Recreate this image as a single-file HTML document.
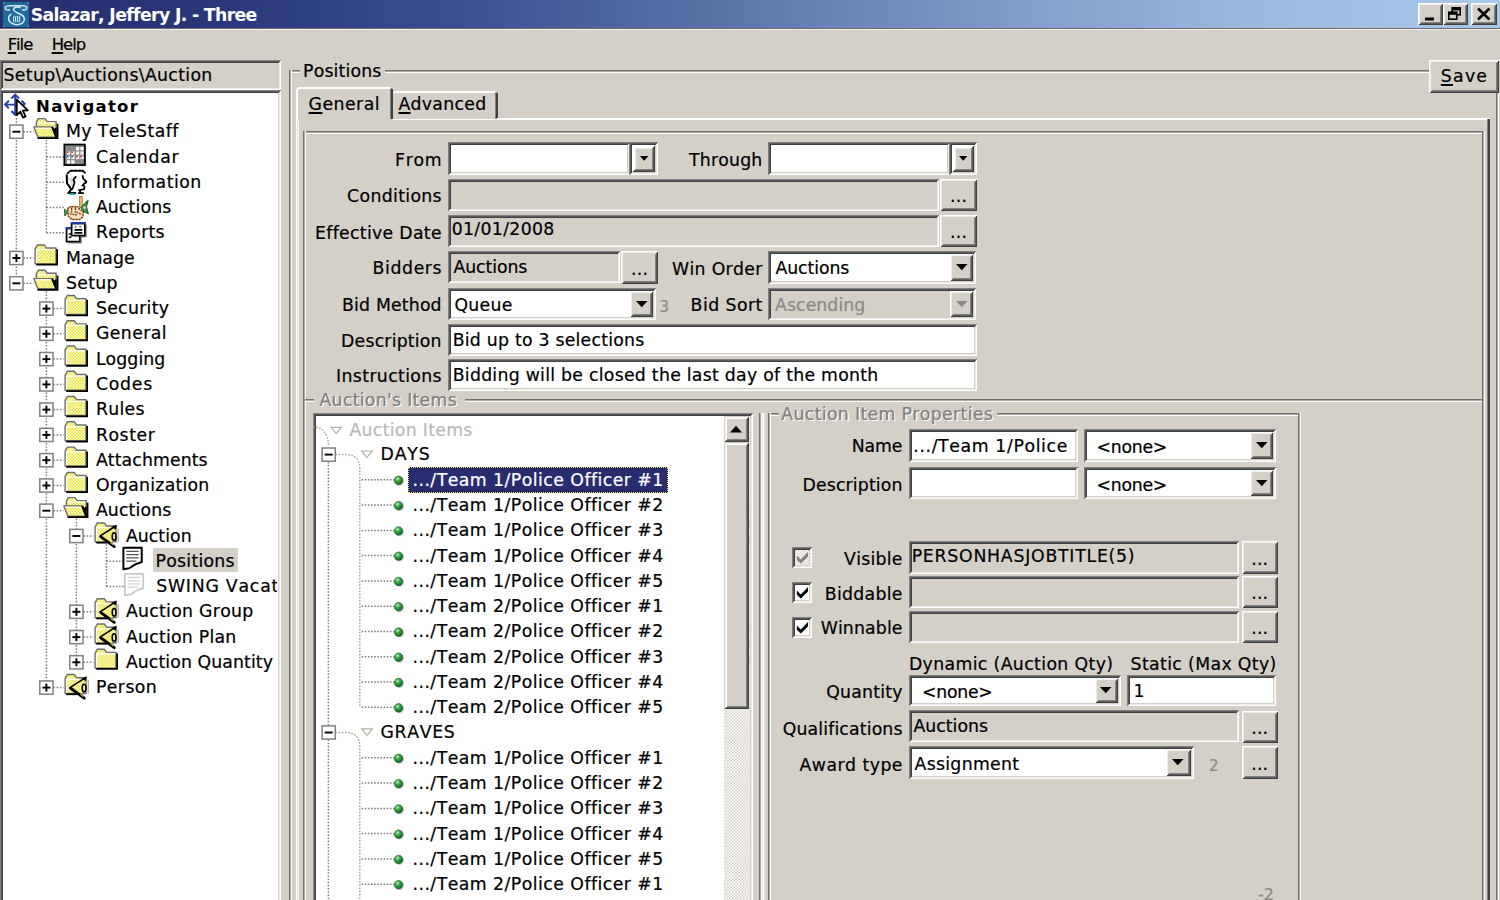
<!DOCTYPE html>
<html lang="en"><head><meta charset="utf-8"><title>Salazar, Jeffery J. - Three</title>
<style>
html,body{margin:0;padding:0;background:#d4d0c8;}
#w{position:relative;width:1500px;height:900px;overflow:hidden;background:#d4d0c8;font-family:"DejaVu Sans","Liberation Sans",sans-serif;font-size:16.5px;color:#000;font-kerning:none;font-variant-ligatures:none;}
#w div,#w svg,#w span.t{position:absolute;}
#w div{box-sizing:border-box;}
span.t{white-space:pre;line-height:normal;-webkit-text-stroke:0.22px currentColor;}
u{text-decoration:underline;text-underline-offset:2px;text-decoration-thickness:1.5px;}
</style></head>
<body><div id="w">
<div style="left:0px;top:0px;width:1500px;height:28px;background:linear-gradient(90deg,#262e6c 0%,#29387a 15%,#3a4f8e 30%,#5d78ac 50%,#829dca 68%,#9dbbe0 85%,#a8c8ec 100%);"></div>
<div style="left:0px;top:28px;width:1500px;height:1px;background:#6a6a78;"></div>
<div style="left:0px;top:29px;width:1500px;height:1px;background:#f4f1e4;"></div>
<svg style="left:3px;top:2px" width="26" height="25" viewBox="0 0 26 25"><rect x="0" y="0" width="26" height="25" fill="#1f6a9a"/>
<rect x="0" y="0" width="1.5" height="1.5" fill="#4a9cc8"/><rect x="24.5" y="0" width="1.5" height="1.5" fill="#4a9cc8"/><rect x="0" y="23.5" width="1.5" height="1.5" fill="#4a9cc8"/><rect x="24.5" y="23.5" width="1.5" height="1.5" fill="#4a9cc8"/>
<g fill="none" stroke="#d6ecf4" stroke-width="1.5" stroke-linecap="round" stroke-linejoin="round">
<path d="M6.5 7.8 C4 8.6 1.8 7.4 2.2 5.6 C2.6 3.8 5 3.6 8 3.7 L18 3.7 C21 3.6 23.6 3.8 23.8 5.6 C24 7.4 22 8.6 19.6 7.8"/>
<path d="M17.2 5.6 C14.5 4.4 10.8 5.2 10.6 7.4 C10.4 9.6 14 10.6 17 12 C20.5 13.6 22.2 16 21 19 C19.6 22.4 14.5 23.4 10.5 22 C6.5 20.6 4.6 17.4 6 14.4 C6.5 13.4 7.2 12.8 8 12.4"/>
</g>
<g stroke="#cfe6f0" stroke-width="1.1"><path d="M10.6 14.6V19.4M12.6 14.6V19.4M14.6 14.6V19.4M16.6 14.6V19.4"/><path d="M10 14.3H17.4M10 19.7H17.4" stroke-width=".8" stroke="#9cc6dc"/></g></svg>
<span id="t0" class="t" style="top:5.00px;font-size:17.3px;left:30.70px;letter-spacing:-0.649px;color:#fff;font-weight:bold;-webkit-text-stroke:0;">Salazar, Jeffery J. - Three</span>
<div style="left:1418px;top:3px;width:25px;height:22px;background:#d4d0c8;box-shadow:inset 1px 1px #fff,inset -1px -1px #404040,inset 2px 2px #ecebe7,inset -2px -2px #606060,inset 3px 3px #d4d0c8,inset -3px -3px #808080;"></div>
<svg style="left:1418px;top:3px" width="25" height="22" viewBox="0 0 25 22"><rect x="7" y="14.5" width="9" height="3" fill="#000"/></svg>
<div style="left:1443px;top:3px;width:25px;height:22px;background:#d4d0c8;box-shadow:inset 1px 1px #fff,inset -1px -1px #404040,inset 2px 2px #ecebe7,inset -2px -2px #606060,inset 3px 3px #d4d0c8,inset -3px -3px #808080;"></div>
<svg style="left:1443px;top:3px" width="25" height="22" viewBox="0 0 25 22"><g fill="none" stroke="#000" stroke-width="1.6"><rect x="9.2" y="4.8" width="8" height="7"/><path d="M9.2 6.2H17.2" stroke-width="2.4"/><rect x="5.8" y="9.2" width="8" height="7" fill="#d4d0c8"/><path d="M5.8 10.6H13.8" stroke-width="2.4"/></g></svg>
<div style="left:1471px;top:3px;width:26px;height:22px;background:#d4d0c8;box-shadow:inset 1px 1px #fff,inset -1px -1px #404040,inset 2px 2px #ecebe7,inset -2px -2px #606060,inset 3px 3px #d4d0c8,inset -3px -3px #808080;"></div>
<svg style="left:1471px;top:3px" width="26" height="22" viewBox="0 0 26 22"><path d="M7 5.5L18.5 16.5M18.5 5.5L7 16.5" stroke="#000" stroke-width="2.6" fill="none"/></svg>
<span id="t1" class="t" style="top:35.20px;font-size:16.5px;left:7.70px;letter-spacing:-1.076px;"><u>F</u>ile</span>
<span id="t2" class="t" style="top:35.20px;font-size:16.5px;left:51.70px;letter-spacing:-1.014px;"><u>H</u>elp</span>
<div style="left:0px;top:60px;width:281px;height:30px;background:#d4d0c8;box-shadow:inset 1px 1px #808080,inset -1px -1px #fff,inset 2px 2px #5a5a5a,inset -2px -2px #ecebe7,inset 3px 3px #404040,inset -3px -3px #d4d0c8;"></div>
<span id="t3" class="t" style="top:64.80px;font-size:17.3px;left:3.50px;letter-spacing:0.337px;">Setup\Auctions\Auction</span>
<div style="left:0px;top:90px;width:281px;height:815px;background:#fff;box-shadow:inset 1px 1px #808080,inset -1px -1px #fff,inset 2px 2px #5a5a5a,inset -2px -2px #ecebe7,inset 3px 3px #404040,inset -3px -3px #d4d0c8;"></div>
<span id="t4" class="t" style="top:97.00px;font-size:16.5px;left:36.10px;letter-spacing:1.254px;font-weight:bold;-webkit-text-stroke:0;">Navigator</span>
<span id="t5" class="t" style="top:121.27px;font-size:17.3px;left:65.90px;letter-spacing:0.421px;">My TeleStaff</span>
<span id="t6" class="t" style="top:146.54px;font-size:17.3px;left:95.90px;letter-spacing:0.712px;">Calendar</span>
<span id="t7" class="t" style="top:171.81px;font-size:17.3px;left:95.90px;letter-spacing:0.506px;">Information</span>
<span id="t8" class="t" style="top:197.08px;font-size:17.3px;left:95.90px;letter-spacing:0.144px;">Auctions</span>
<span id="t9" class="t" style="top:222.35px;font-size:17.3px;left:95.90px;letter-spacing:0.270px;">Reports</span>
<span id="t10" class="t" style="top:247.62px;font-size:17.3px;left:65.90px;letter-spacing:0.009px;">Manage</span>
<span id="t11" class="t" style="top:272.89px;font-size:17.3px;left:65.90px;letter-spacing:0.347px;">Setup</span>
<span id="t12" class="t" style="top:298.16px;font-size:17.3px;left:95.90px;letter-spacing:0.304px;">Security</span>
<span id="t13" class="t" style="top:323.43px;font-size:17.3px;left:95.90px;letter-spacing:0.429px;">General</span>
<span id="t14" class="t" style="top:348.70px;font-size:17.3px;left:95.90px;letter-spacing:0.088px;">Logging</span>
<span id="t15" class="t" style="top:373.97px;font-size:17.3px;left:95.90px;letter-spacing:0.788px;">Codes</span>
<span id="t16" class="t" style="top:399.24px;font-size:17.3px;left:95.90px;letter-spacing:0.323px;">Rules</span>
<span id="t17" class="t" style="top:424.51px;font-size:17.3px;left:95.90px;letter-spacing:0.558px;">Roster</span>
<span id="t18" class="t" style="top:449.78px;font-size:17.3px;left:95.90px;letter-spacing:0.108px;">Attachments</span>
<span id="t19" class="t" style="top:475.05px;font-size:17.3px;left:95.90px;letter-spacing:0.237px;">Organization</span>
<span id="t20" class="t" style="top:500.32px;font-size:17.3px;left:95.90px;letter-spacing:0.144px;">Auctions</span>
<span id="t21" class="t" style="top:525.59px;font-size:17.3px;left:125.90px;letter-spacing:0.068px;">Auction</span>
<div style="left:153px;top:547.5px;width:85px;height:24.5px;background:#d4d0c8;"></div>
<span id="t22" class="t" style="top:550.86px;font-size:17.3px;left:155.60px;letter-spacing:0.249px;">Positions</span>
<span id="t23" class="t" style="top:576.13px;font-size:17.3px;left:156.20px;letter-spacing:0.786px;display:block;width:121.3px;overflow:hidden;">SWING Vacation</span>
<span id="t24" class="t" style="top:601.40px;font-size:17.3px;left:125.90px;letter-spacing:0.294px;">Auction Group</span>
<span id="t25" class="t" style="top:626.67px;font-size:17.3px;left:125.90px;letter-spacing:0.251px;">Auction Plan</span>
<span id="t26" class="t" style="top:651.94px;font-size:17.3px;left:125.90px;letter-spacing:0.096px;">Auction Quantity</span>
<span id="t27" class="t" style="top:677.21px;font-size:17.3px;left:95.90px;letter-spacing:0.443px;">Person</span>
<svg style="left:0;top:0" width="300" height="900" viewBox="0 0 300 900"><style>.d{stroke:#808080;stroke-width:1.5;stroke-dasharray:1.58 1.58;fill:none}</style><defs>
<pattern id="dith" width="2" height="2" patternUnits="userSpaceOnUse"><rect width="2" height="2" fill="#fffef0"/><rect width="1" height="1" fill="#ece21c"/><rect x="1" y="1" width="1" height="1" fill="#ece21c"/></pattern>
<g id="i-fold"><path d="M1.1 12.9V3.4L2.5 .9H6.9L8.3 2.9H14.3V12.9Z" fill="url(#dith)" stroke="#6e6e6e" stroke-width=".9" stroke-linejoin="round"/><path d="M2 3.9H13.6M2 3.9V12.4" fill="none" stroke="#fff" stroke-width=".8"/><path d="M15 3.6V13.4H1.8" fill="none" stroke="#000" stroke-width="1.1"/></g>
<g id="i-fopen"><path d="M1.9 10V3.2L3.1 .9H7.3L8.7 2.8H14.4V12.6" fill="url(#dith)" stroke="#6e6e6e" stroke-width=".9" stroke-linejoin="round"/><path d="M2.8 3.7H13.6" stroke="#fff" stroke-width=".8"/><path d="M12.6 7.6L14.7 12.9V6.4Z" fill="#000"/><path d="M.3 6.2H11.9L14.5 12.6H2.8Z" fill="url(#dith)" stroke="#6e6e6e" stroke-width=".9" stroke-linejoin="round"/><path d="M1.2 7H11.4" stroke="#fff" stroke-width=".8"/><path d="M11.9 6.2L14.5 12.8" stroke="#000" stroke-width="1.3"/><path d="M2.6 13.3H15.3V4.2" fill="none" stroke="#000" stroke-width="1.1"/></g>
<g id="i-fauc"><path d="M1.1 12.9V3.4L2.5 .9H6.9L8.3 2.9H14.3V12.9Z" fill="url(#dith)" stroke="#6e6e6e" stroke-width=".9" stroke-linejoin="round"/><path d="M2 3.9H10M2 3.9V12.4" fill="none" stroke="#fff" stroke-width=".8"/><path d="M1.8 13.4H8.6" fill="none" stroke="#000" stroke-width="1.1"/><path d="M15.7 4.4V13" stroke="#a0a0a0" stroke-width=".7"/><path d="M4.2 9.4L14.3 2.8L13.8 9.4L11 13.6Z" fill="url(#dith)"/><path d="M3.9 9.4L14.3 2.7" stroke="#000" stroke-width="1" fill="none"/><path d="M11.4 3.4L14.8 2L14.2 5.2Z" fill="#000"/><path d="M4.6 9.6L13.2 15.9" stroke="#000" stroke-width="1.8" stroke-linecap="round"/><path d="M10.8 13.6L12.6 14.9" stroke="#e8e020" stroke-width=".6"/><ellipse cx="13.1" cy="9.5" rx="1.2" ry="2.4" fill="none" stroke="#000" stroke-width="1"/></g>
<g id="i-doc"><path d="M0 .6H11.6V9.6L7.5 11.1L3.7 13.6L0 14.2Z" fill="#fff" stroke="#000" stroke-width="1.25" stroke-linejoin="round"/><path d="M1.8 2.9H9.7M1.8 5H9.7M1.8 7H9.7M1.8 9H8.2" stroke="#555" stroke-width=".8"/></g>
<g id="i-docg"><path d="M0 .6H11.6V9.6L7.5 11.1L3.7 13.6L0 14.2Z" fill="#fff" stroke="#c8c8c8" stroke-width="1.1" stroke-linejoin="round"/><path d="M1.8 2.9H9.7M1.8 5H9.7M1.8 7H9.7M1.8 9H8.2" stroke="#d2d2d2" stroke-width=".8"/></g>
<g id="i-cal"><rect x="1.6" y="1.2" width="12.6" height="12.6" fill="#bdbdbd"/><rect x=".6" y=".4" width="13" height="13" fill="#8a8a8a" stroke="#000" stroke-width="1.1"/><g fill="#fff"><rect x="8" y="2" width="2" height="2"/><rect x="10.8" y="2" width="2" height="2"/><rect x="2.2" y="4.8" width="2" height="2"/><rect x="5" y="4.8" width="2" height="2"/><rect x="8" y="4.8" width="2" height="2"/><rect x="10.8" y="4.8" width="2" height="2"/><rect x="2.2" y="7.6" width="2" height="2"/><rect x="5" y="7.6" width="2" height="2"/><rect x="8" y="7.6" width="2" height="2"/><rect x="10.8" y="7.6" width="2" height="2"/><rect x="2.2" y="10.4" width="2" height="2"/><rect x="5" y="10.4" width="2" height="2"/></g><g fill="#e02020"><rect x="2.2" y="4.8" width="1" height="1"/><rect x="5" y="4.8" width="1" height="1"/><rect x="8" y="7.6" width="1" height="1"/><rect x="10.8" y="7.6" width="1" height="1"/></g><g fill="#2040c0"><rect x="2.2" y="7.6" width="1" height="1"/><rect x="5" y="7.6" width="1" height="1"/></g></g>
<g id="i-info" fill="none" stroke="#000" stroke-width="1.15" stroke-linecap="round" stroke-linejoin="round"><path d="M2.8 5L5.6 11.8L6.6 6.2Z" fill="#dcdcdc" stroke="none"/><path d="M2.7 2.6L4.4 1H12.2L13.7 2.2" stroke-dasharray="1.5 .9"/><path d="M2.1 3.9L2.3 8.9L5 12.7L3.1 15.1H7.5" stroke-width="1.3"/><path d="M7.8 4.9L6.3 6.4L7.1 8.5L6.5 10.2L5.7 12.5" stroke-dasharray="1.7 .8"/><path d="M12.2 4.3L12.6 6L14.7 8.1L13.5 8.9L12 10.2L13.5 11.1L13 12.7L9.9 13.2L10.9 14.9" stroke-dasharray="1.9 .7"/><path d="M9.7 15.1H12.6"/><path d="M4.6 15.7H6.6" stroke="#0aa"/></g>
<g id="i-auc"><path d="M10.3 1.2H11.9V8.4H10.3Z" fill="#f0cc80" stroke="#a86a20" stroke-width=".6"/><path d="M11.2 8.2L15.6 3.8L14.6 7.8L15.8 12.2L12.4 10.4Z" fill="#38a050" stroke="#1c6a2c" stroke-width=".7" stroke-linejoin="round"/><path d="M.7 9.2L2.8 11.2L.9 13.6Z" fill="#38a050" stroke="#1c6a2c" stroke-width=".6" stroke-linejoin="round"/><circle cx="13.4" cy="8.2" r=".9" fill="#f0c0d8"/><path d="M2.8 9.4C3 7.6 4.8 7.4 5.2 8.4C5.8 7 7.4 7 7.6 8.4C8.4 7.2 10 7.6 10 9.2L12.6 10.6L12.4 14L10.4 15.8H5.4L3 13.6Z" fill="#f6e2b4" stroke="#7a3410" stroke-width=".9" stroke-linejoin="round" stroke-dasharray="1.4 .5"/><path d="M5.2 8.6V11.4M7.6 8.6V11.6M8.4 11.2L11.4 12.6M4 12.2L8.6 13" stroke="#7a3410" stroke-width=".8" fill="none" stroke-dasharray="1.2 .5"/></g>
<g id="i-rep"><path d="M2.8 14.6H11.2V11" fill="none" stroke="#8a8a8a" stroke-width=".8"/><rect x="2" y="5.4" width="8.4" height="8.4" fill="#fff" stroke="#000" stroke-width="1.1"/><path d="M1.5 5.3H5.2" stroke="#2038a8" stroke-width="1.3"/><path d="M14.4 3V10.8H11" fill="none" stroke="#8a8a8a" stroke-width=".8"/><rect x="5.2" y="2.3" width="8.4" height="7.7" fill="#fff" stroke="#000" stroke-width="1.1"/><path d="M4.7 2.1H14.2" stroke="#2038a8" stroke-width="1.4"/><path d="M7 6.4H12M7 8.3H12" stroke="#000" stroke-width="1"/><path d="M7.4 4.5H8.2M10.2 4.5H11" stroke="#000" stroke-width=".9"/><path d="M3.4 9H5M3.4 11H5" stroke="#000" stroke-width=".9"/></g>
<g id="i-nav"><g stroke="#2a3fa4" stroke-width="1.2" fill="none"><path d="M7.4 1.4V13.4M1.2 7.4H13.6"/><path d="M5 3.6L7.4 1.2L9.8 3.6M5 11.4L7.4 13.8L9.8 11.4M3.4 5L1 7.4L3.4 9.8M11.4 5L13.8 7.4" stroke-width="1.3"/></g><path d="M8.4 4.2V14L10.6 11.8L12.4 15.6L14 14.9L12.2 11.2L15.4 11Z" fill="#fff" stroke="#000" stroke-width="1.15" stroke-linejoin="round"/></g>
</defs><path d="M16.4 118.0V283.3" class="d"/><path d="M46.4 139.7V232.8" class="d"/><path d="M46.4 291.3V687.6" class="d"/><path d="M76.4 518.7V662.3" class="d"/><path d="M106.4 544.0V586.5" class="d"/><use href="#i-nav" transform="translate(3.5 92.9) scale(1.58)"/><path d="M23.4 131.7H33.4" class="d"/><use href="#i-fopen" transform="translate(33.4 117.2) scale(1.58)"/><rect x="9.8" y="125.1" width="13.2" height="13.2" fill="#fff" stroke="#808080" stroke-width="1.5"/><path d="M12.4 131.7H20.4" stroke="#000" stroke-width="1.9"/><path d="M46.4 156.9H64.4" class="d"/><use href="#i-cal" transform="translate(63.4 143.9) scale(1.58)"/><path d="M46.4 182.2H64.4" class="d"/><use href="#i-info" transform="translate(63.4 169.2) scale(1.58)"/><path d="M46.4 207.5H64.4" class="d"/><use href="#i-auc" transform="translate(63.4 194.5) scale(1.58)"/><path d="M46.4 232.8H64.4" class="d"/><use href="#i-rep" transform="translate(63.4 219.8) scale(1.58)"/><path d="M23.4 258.0H33.4" class="d"/><use href="#i-fold" transform="translate(33.4 243.5) scale(1.58)"/><rect x="9.8" y="251.4" width="13.2" height="13.2" fill="#fff" stroke="#808080" stroke-width="1.5"/><path d="M12.4 258.0H20.4" stroke="#000" stroke-width="1.9"/><path d="M16.4 254.0V262.0" stroke="#000" stroke-width="1.9"/><path d="M23.4 283.3H33.4" class="d"/><use href="#i-fopen" transform="translate(33.4 268.8) scale(1.58)"/><rect x="9.8" y="276.7" width="13.2" height="13.2" fill="#fff" stroke="#808080" stroke-width="1.5"/><path d="M12.4 283.3H20.4" stroke="#000" stroke-width="1.9"/><path d="M53.4 308.6H63.4" class="d"/><use href="#i-fold" transform="translate(63.4 294.1) scale(1.58)"/><rect x="39.8" y="302.0" width="13.2" height="13.2" fill="#fff" stroke="#808080" stroke-width="1.5"/><path d="M42.4 308.6H50.4" stroke="#000" stroke-width="1.9"/><path d="M46.4 304.6V312.6" stroke="#000" stroke-width="1.9"/><path d="M53.4 333.8H63.4" class="d"/><use href="#i-fold" transform="translate(63.4 319.3) scale(1.58)"/><rect x="39.8" y="327.2" width="13.2" height="13.2" fill="#fff" stroke="#808080" stroke-width="1.5"/><path d="M42.4 333.8H50.4" stroke="#000" stroke-width="1.9"/><path d="M46.4 329.8V337.8" stroke="#000" stroke-width="1.9"/><path d="M53.4 359.1H63.4" class="d"/><use href="#i-fold" transform="translate(63.4 344.6) scale(1.58)"/><rect x="39.8" y="352.5" width="13.2" height="13.2" fill="#fff" stroke="#808080" stroke-width="1.5"/><path d="M42.4 359.1H50.4" stroke="#000" stroke-width="1.9"/><path d="M46.4 355.1V363.1" stroke="#000" stroke-width="1.9"/><path d="M53.4 384.4H63.4" class="d"/><use href="#i-fold" transform="translate(63.4 369.9) scale(1.58)"/><rect x="39.8" y="377.8" width="13.2" height="13.2" fill="#fff" stroke="#808080" stroke-width="1.5"/><path d="M42.4 384.4H50.4" stroke="#000" stroke-width="1.9"/><path d="M46.4 380.4V388.4" stroke="#000" stroke-width="1.9"/><path d="M53.4 409.6H63.4" class="d"/><use href="#i-fold" transform="translate(63.4 395.1) scale(1.58)"/><rect x="39.8" y="403.0" width="13.2" height="13.2" fill="#fff" stroke="#808080" stroke-width="1.5"/><path d="M42.4 409.6H50.4" stroke="#000" stroke-width="1.9"/><path d="M46.4 405.6V413.6" stroke="#000" stroke-width="1.9"/><path d="M53.4 434.9H63.4" class="d"/><use href="#i-fold" transform="translate(63.4 420.4) scale(1.58)"/><rect x="39.8" y="428.3" width="13.2" height="13.2" fill="#fff" stroke="#808080" stroke-width="1.5"/><path d="M42.4 434.9H50.4" stroke="#000" stroke-width="1.9"/><path d="M46.4 430.9V438.9" stroke="#000" stroke-width="1.9"/><path d="M53.4 460.2H63.4" class="d"/><use href="#i-fold" transform="translate(63.4 445.7) scale(1.58)"/><rect x="39.8" y="453.6" width="13.2" height="13.2" fill="#fff" stroke="#808080" stroke-width="1.5"/><path d="M42.4 460.2H50.4" stroke="#000" stroke-width="1.9"/><path d="M46.4 456.2V464.2" stroke="#000" stroke-width="1.9"/><path d="M53.4 485.5H63.4" class="d"/><use href="#i-fold" transform="translate(63.4 471.0) scale(1.58)"/><rect x="39.8" y="478.9" width="13.2" height="13.2" fill="#fff" stroke="#808080" stroke-width="1.5"/><path d="M42.4 485.5H50.4" stroke="#000" stroke-width="1.9"/><path d="M46.4 481.5V489.5" stroke="#000" stroke-width="1.9"/><path d="M53.4 510.7H63.4" class="d"/><use href="#i-fopen" transform="translate(63.4 496.2) scale(1.58)"/><rect x="39.8" y="504.1" width="13.2" height="13.2" fill="#fff" stroke="#808080" stroke-width="1.5"/><path d="M42.4 510.7H50.4" stroke="#000" stroke-width="1.9"/><path d="M83.4 536.0H93.4" class="d"/><use href="#i-fauc" transform="translate(93.4 521.5) scale(1.58)"/><rect x="69.8" y="529.4" width="13.2" height="13.2" fill="#fff" stroke="#808080" stroke-width="1.5"/><path d="M72.4 536.0H80.4" stroke="#000" stroke-width="1.9"/><path d="M106.4 561.3H124.4" class="d"/><use href="#i-doc" transform="translate(123.4 546.8) scale(1.58)"/><path d="M106.4 586.5H124.4" class="d"/><use href="#i-docg" transform="translate(124.9 572.9) scale(1.58)"/><path d="M83.4 611.8H93.4" class="d"/><use href="#i-fauc" transform="translate(93.4 597.3) scale(1.58)"/><rect x="69.8" y="605.2" width="13.2" height="13.2" fill="#fff" stroke="#808080" stroke-width="1.5"/><path d="M72.4 611.8H80.4" stroke="#000" stroke-width="1.9"/><path d="M76.4 607.8V615.8" stroke="#000" stroke-width="1.9"/><path d="M83.4 637.1H93.4" class="d"/><use href="#i-fauc" transform="translate(93.4 622.6) scale(1.58)"/><rect x="69.8" y="630.5" width="13.2" height="13.2" fill="#fff" stroke="#808080" stroke-width="1.5"/><path d="M72.4 637.1H80.4" stroke="#000" stroke-width="1.9"/><path d="M76.4 633.1V641.1" stroke="#000" stroke-width="1.9"/><path d="M83.4 662.3H93.4" class="d"/><use href="#i-fold" transform="translate(93.4 647.8) scale(1.58)"/><rect x="69.8" y="655.7" width="13.2" height="13.2" fill="#fff" stroke="#808080" stroke-width="1.5"/><path d="M72.4 662.3H80.4" stroke="#000" stroke-width="1.9"/><path d="M76.4 658.3V666.3" stroke="#000" stroke-width="1.9"/><path d="M53.4 687.6H63.4" class="d"/><use href="#i-fauc" transform="translate(63.4 673.1) scale(1.58)"/><rect x="39.8" y="681.0" width="13.2" height="13.2" fill="#fff" stroke="#808080" stroke-width="1.5"/><path d="M42.4 687.6H50.4" stroke="#000" stroke-width="1.9"/><path d="M46.4 683.6V691.6" stroke="#000" stroke-width="1.9"/></svg>
<div style="left:289px;top:69.5px;width:11px;height:1px;background:#75726d;"></div>
<div style="left:289px;top:70.5px;width:11px;height:1px;background:#aba8a2;"></div>
<div style="left:289px;top:71.5px;width:11px;height:1px;background:#fff;"></div>
<div style="left:385px;top:69.5px;width:1045px;height:1px;background:#75726d;"></div>
<div style="left:385px;top:70.5px;width:1045px;height:1px;background:#aba8a2;"></div>
<div style="left:385px;top:71.5px;width:1045px;height:1px;background:#fff;"></div>
<div style="left:288.5px;top:70px;width:1px;height:832px;background:#75726d;"></div>
<div style="left:289.5px;top:70px;width:1px;height:832px;background:#aba8a2;"></div>
<div style="left:290.5px;top:70px;width:1px;height:832px;background:#fff;"></div>
<div style="left:1495.5px;top:92px;width:1px;height:810px;background:#75726d;"></div>
<div style="left:1496.5px;top:92px;width:1px;height:810px;background:#aba8a2;"></div>
<div style="left:1497.5px;top:92px;width:1px;height:810px;background:#fff;"></div>
<span id="t28" class="t" style="top:61.20px;font-size:17.3px;left:303.10px;letter-spacing:0.162px;">Positions</span>
<div style="left:1429px;top:60px;width:70px;height:33px;background:#d4d0c8;box-shadow:inset 1px 1px #fff,inset -1px -1px #404040,inset 2px 2px #ecebe7,inset -2px -2px #606060,inset 3px 3px #d4d0c8,inset -3px -3px #808080;"></div>
<span id="t29" class="t" style="top:66.40px;font-size:17.3px;left:1440.80px;letter-spacing:1.254px;"><u>S</u>ave</span>
<div style="left:392px;top:118px;width:1098px;height:2px;background:#fff;"></div>
<div style="left:296px;top:89px;width:2px;height:31px;background:#fff;"></div>
<div style="left:296px;top:120px;width:1px;height:781px;background:#fff;"></div>
<div style="left:297px;top:120px;width:1px;height:781px;background:#e4e2dc;"></div>
<div style="left:298px;top:120px;width:1px;height:781px;background:#fbfbfa;"></div>
<div style="left:1487px;top:119px;width:1px;height:782px;background:#808080;"></div>
<div style="left:1488px;top:119px;width:2px;height:782px;background:#404040;"></div>
<div style="left:296px;top:87px;width:96px;height:32px;border-top:2px solid #fff;border-top-left-radius:4px;border-top-right-radius:3px;border-left:2px solid #fff;border-right:2px solid #808080;background:#d4d0c8;"></div>
<div style="left:391px;top:89px;width:2px;height:30px;background:#404040;"></div>
<span id="t30" class="t" style="top:94.10px;font-size:17.3px;left:308.60px;letter-spacing:0.479px;"><u>G</u>eneral</span>
<div style="left:393px;top:90.5px;width:104px;height:28px;border-top:2px solid #fff;border-top-left-radius:3px;border-top-right-radius:3px;border-right:2px solid #808080;background:#d4d0c8;"></div>
<div style="left:495.6px;top:92.5px;width:2px;height:25.5px;background:#404040;"></div>
<span id="t31" class="t" style="top:94.10px;font-size:17.3px;left:398.40px;letter-spacing:0.318px;"><u>A</u>dvanced</span>
<div style="left:302.7px;top:131.3px;width:1181px;height:1px;background:#75726d;"></div>
<div style="left:302.7px;top:132.3px;width:1181px;height:1px;background:#aba8a2;"></div>
<div style="left:302.7px;top:133.3px;width:1181px;height:1px;background:#fff;"></div>
<div style="left:302.7px;top:131.3px;width:1px;height:770px;background:#75726d;"></div>
<div style="left:303.7px;top:131.3px;width:1px;height:770px;background:#aba8a2;"></div>
<div style="left:304.7px;top:131.3px;width:1px;height:770px;background:#fff;"></div>
<div style="left:1481.6px;top:131.3px;width:1px;height:770px;background:#75726d;"></div>
<div style="left:1482.6px;top:131.3px;width:1px;height:770px;background:#aba8a2;"></div>
<div style="left:1483.6px;top:131.3px;width:1px;height:770px;background:#fff;"></div>
<span id="t32" class="t" style="top:149.60px;font-size:17.3px;left:395.10px;letter-spacing:0.682px;">From</span>
<div style="left:448px;top:142px;width:182px;height:32.5px;background:#fff;box-shadow:inset 1px 1px #808080,inset -1px -1px #fff,inset 2px 2px #5a5a5a,inset -2px -2px #ecebe7,inset 3px 3px #404040,inset -3px -3px #d4d0c8;"></div>
<div style="left:629px;top:142px;width:29px;height:32.5px;background:#d4d0c8;box-shadow:inset 1px 1px #808080,inset -1px -1px #fff,inset 2px 2px #5a5a5a,inset -2px -2px #ecebe7,inset 3px 3px #404040,inset -3px -3px #d4d0c8;"></div>
<div style="left:632px;top:145px;width:23px;height:26.5px;background:#d4d0c8;box-shadow:inset 1px 1px #fff,inset -1px -1px #404040,inset 2px 2px #fff,inset -2px -2px #5c5c5c,inset 3px 3px #fff,inset -3px -3px #808080,inset 4px 4px #eceae6;"></div>
<svg style="left:638.6999999999999px;top:155.04999999999998px" width="10.4" height="6.8" viewBox="0 0 10.4 6.8"><path d="M1 1H9.4L5.2 5.8Z" fill="#000"/></svg>
<span id="t33" class="t" style="top:150.20px;font-size:17.3px;left:689.10px;letter-spacing:0.190px;">Through</span>
<div style="left:768px;top:142px;width:182px;height:32.5px;background:#fff;box-shadow:inset 1px 1px #808080,inset -1px -1px #fff,inset 2px 2px #5a5a5a,inset -2px -2px #ecebe7,inset 3px 3px #404040,inset -3px -3px #d4d0c8;"></div>
<div style="left:949px;top:142px;width:28px;height:32.5px;background:#d4d0c8;box-shadow:inset 1px 1px #808080,inset -1px -1px #fff,inset 2px 2px #5a5a5a,inset -2px -2px #ecebe7,inset 3px 3px #404040,inset -3px -3px #d4d0c8;"></div>
<div style="left:952px;top:145px;width:22px;height:26.5px;background:#d4d0c8;box-shadow:inset 1px 1px #fff,inset -1px -1px #404040,inset 2px 2px #fff,inset -2px -2px #5c5c5c,inset 3px 3px #fff,inset -3px -3px #808080,inset 4px 4px #eceae6;"></div>
<svg style="left:958.1999999999999px;top:155.04999999999998px" width="10.4" height="6.8" viewBox="0 0 10.4 6.8"><path d="M1 1H9.4L5.2 5.8Z" fill="#000"/></svg>
<span id="t34" class="t" style="top:186.40px;font-size:17.3px;left:347.10px;letter-spacing:0.335px;">Conditions</span>
<div style="left:448px;top:179px;width:490.5px;height:32px;background:#d4d0c8;box-shadow:inset 1px 1px #808080,inset -1px -1px #fff,inset 2px 2px #5a5a5a,inset -2px -2px #ecebe7,inset 3px 3px #404040,inset -3px -3px #d4d0c8;"></div>
<div style="left:940px;top:179px;width:37px;height:32px;background:#d4d0c8;box-shadow:inset 1px 1px #fff,inset -1px -1px #404040,inset 2px 2px #ecebe7,inset -2px -2px #606060,inset 3px 3px #d4d0c8,inset -3px -3px #808080;"></div>
<span id="t35" class="t" style="top:186.10px;font-size:17.3px;left:950.10px;letter-spacing:0.208px;">...</span>
<span id="t36" class="t" style="top:222.60px;font-size:17.3px;left:315.10px;letter-spacing:0.310px;">Effective Date</span>
<div style="left:448px;top:215px;width:490.5px;height:32px;background:#d4d0c8;box-shadow:inset 1px 1px #808080,inset -1px -1px #fff,inset 2px 2px #5a5a5a,inset -2px -2px #ecebe7,inset 3px 3px #404040,inset -3px -3px #d4d0c8;"></div>
<span id="t37" class="t" style="top:218.90px;font-size:17.3px;left:451.70px;letter-spacing:0.332px;">01/01/2008</span>
<div style="left:940px;top:215px;width:37px;height:32px;background:#d4d0c8;box-shadow:inset 1px 1px #fff,inset -1px -1px #404040,inset 2px 2px #ecebe7,inset -2px -2px #606060,inset 3px 3px #d4d0c8,inset -3px -3px #808080;"></div>
<span id="t38" class="t" style="top:222.10px;font-size:17.3px;left:950.10px;letter-spacing:0.208px;">...</span>
<span id="t39" class="t" style="top:258.20px;font-size:17.3px;left:372.60px;letter-spacing:0.609px;">Bidders</span>
<div style="left:448px;top:251px;width:171.5px;height:32px;background:#d4d0c8;box-shadow:inset 1px 1px #808080,inset -1px -1px #fff,inset 2px 2px #5a5a5a,inset -2px -2px #ecebe7,inset 3px 3px #404040,inset -3px -3px #d4d0c8;"></div>
<span id="t40" class="t" style="top:256.90px;font-size:17.3px;left:453.50px;letter-spacing:-0.084px;">Auctions</span>
<div style="left:621px;top:251px;width:37px;height:32.5px;background:#d4d0c8;box-shadow:inset 1px 1px #fff,inset -1px -1px #404040,inset 2px 2px #ecebe7,inset -2px -2px #606060,inset 3px 3px #d4d0c8,inset -3px -3px #808080;"></div>
<span id="t41" class="t" style="top:258.60px;font-size:17.3px;left:631.10px;letter-spacing:0.208px;">...</span>
<span id="t42" class="t" style="top:258.60px;font-size:17.3px;left:672.10px;letter-spacing:0.306px;">Win Order</span>
<div style="left:768px;top:251px;width:208px;height:32.5px;background:#fff;box-shadow:inset 1px 1px #808080,inset -1px -1px #fff,inset 2px 2px #5a5a5a,inset -2px -2px #ecebe7,inset 3px 3px #404040,inset -3px -3px #d4d0c8;"></div>
<div style="left:950px;top:254px;width:23px;height:26.5px;background:#d4d0c8;box-shadow:inset 1px 1px #fff,inset -1px -1px #404040,inset 2px 2px #ecebe7,inset -2px -2px #606060,inset 3px 3px #d4d0c8,inset -3px -3px #808080;"></div>
<svg style="left:954.75px;top:263.40000000000003px" width="13.5" height="8.3" viewBox="0 0 13.5 8.3"><path d="M1 1H12.5L6.75 7.3Z" fill="#000"/></svg>
<span id="t43" class="t" style="top:257.80px;font-size:17.3px;left:775.50px;letter-spacing:-0.084px;">Auctions</span>
<span id="t44" class="t" style="top:294.60px;font-size:17.3px;left:342.10px;letter-spacing:0.174px;">Bid Method</span>
<div style="left:448px;top:287.5px;width:208px;height:32px;background:#fff;box-shadow:inset 1px 1px #808080,inset -1px -1px #fff,inset 2px 2px #5a5a5a,inset -2px -2px #ecebe7,inset 3px 3px #404040,inset -3px -3px #d4d0c8;"></div>
<div style="left:630px;top:290.5px;width:23px;height:26px;background:#d4d0c8;box-shadow:inset 1px 1px #fff,inset -1px -1px #404040,inset 2px 2px #ecebe7,inset -2px -2px #606060,inset 3px 3px #d4d0c8,inset -3px -3px #808080;"></div>
<svg style="left:634.75px;top:299.65000000000003px" width="13.5" height="8.3" viewBox="0 0 13.5 8.3"><path d="M1 1H12.5L6.75 7.3Z" fill="#000"/></svg>
<span id="t45" class="t" style="top:294.60px;font-size:17.3px;left:454.50px;letter-spacing:0.255px;">Queue</span>
<span id="t46" class="t" style="top:298.10px;font-size:15px;left:659.60px;letter-spacing:0.682px;color:#8c8a84;">3</span>
<span id="t47" class="t" style="top:294.60px;font-size:17.3px;left:690.60px;letter-spacing:0.450px;">Bid Sort</span>
<div style="left:768px;top:287.5px;width:208px;height:32px;background:#d4d0c8;box-shadow:inset 1px 1px #808080,inset -1px -1px #fff,inset 2px 2px #5a5a5a,inset -2px -2px #ecebe7,inset 3px 3px #404040,inset -3px -3px #d4d0c8;"></div>
<div style="left:950px;top:290.5px;width:23px;height:26px;background:#d4d0c8;box-shadow:inset 1px 1px #fff,inset -1px -1px #404040,inset 2px 2px #ecebe7,inset -2px -2px #606060,inset 3px 3px #d4d0c8,inset -3px -3px #808080;"></div>
<svg style="left:954.75px;top:299.65000000000003px" width="13.5" height="8.3" viewBox="0 0 13.5 8.3"><path d="M1 1H12.5L6.75 7.3Z" fill="#8c8984"/></svg>
<span id="t48" class="t" style="top:294.60px;font-size:17.3px;left:775.10px;letter-spacing:0.074px;color:#8c8984;">Ascending</span>
<span id="t49" class="t" style="top:330.60px;font-size:17.3px;left:341.10px;letter-spacing:0.206px;">Description</span>
<div style="left:448px;top:323.5px;width:529px;height:32px;background:#fff;box-shadow:inset 1px 1px #808080,inset -1px -1px #fff,inset 2px 2px #5a5a5a,inset -2px -2px #ecebe7,inset 3px 3px #404040,inset -3px -3px #d4d0c8;"></div>
<span id="t50" class="t" style="top:329.60px;font-size:17.3px;left:452.70px;letter-spacing:0.241px;">Bid up to 3 selections</span>
<span id="t51" class="t" style="top:365.60px;font-size:17.3px;left:336.10px;letter-spacing:0.364px;">Instructions</span>
<div style="left:448px;top:358.5px;width:529px;height:32px;background:#fff;box-shadow:inset 1px 1px #808080,inset -1px -1px #fff,inset 2px 2px #5a5a5a,inset -2px -2px #ecebe7,inset 3px 3px #404040,inset -3px -3px #d4d0c8;"></div>
<span id="t52" class="t" style="top:364.60px;font-size:17.3px;left:452.70px;letter-spacing:0.272px;">Bidding will be closed the last day of the month</span>
<div style="left:304.5px;top:399.2px;width:9px;height:1px;background:#75726d;"></div>
<div style="left:304.5px;top:400.2px;width:9px;height:1px;background:#aba8a2;"></div>
<div style="left:304.5px;top:401.2px;width:9px;height:1px;background:#fff;"></div>
<div style="left:465px;top:399.2px;width:1017px;height:1px;background:#75726d;"></div>
<div style="left:465px;top:400.2px;width:1017px;height:1px;background:#aba8a2;"></div>
<div style="left:465px;top:401.2px;width:1017px;height:1px;background:#fff;"></div>
<span id="t53" class="t" style="top:390.00px;font-size:17.3px;left:319.50px;letter-spacing:0.302px;color:#827f7a;text-shadow:1.3px 1.3px 0 #fff;">Auction&#x27;s Items</span>
<div style="left:313px;top:413px;width:440px;height:490px;background:#fff;box-shadow:inset 1px 1px #808080,inset -1px -1px #fff,inset 2px 2px #5a5a5a,inset -2px -2px #ecebe7,inset 3px 3px #404040,inset -3px -3px #d4d0c8;"></div>
<div style="left:724px;top:416px;width:26px;height:486px;background:#ebe9e4;background-image:conic-gradient(#fff 25%,#d4d0c8 0 50%,#fff 0 75%,#d4d0c8 0);background-size:3.16px 3.16px;"></div>
<div style="left:724px;top:416px;width:25px;height:26px;background:#d4d0c8;box-shadow:inset 1px 1px #d4d0c8,inset -1px -1px #404040,inset 2px 2px #f2f1ee,inset -2px -2px #5c5c5c,inset 3px 3px #fff,inset -3px -3px #808080;"></div>
<svg style="left:729px;top:424.5px" width="14" height="9" viewBox="0 0 14 9"><path d="M7 .8L13 7.6H1Z" fill="#000"/></svg>
<div style="left:724px;top:442px;width:25px;height:267px;background:#d4d0c8;box-shadow:inset 1px 1px #d4d0c8,inset -1px -1px #404040,inset 2px 2px #f2f1ee,inset -2px -2px #5c5c5c,inset 3px 3px #fff,inset -3px -3px #808080;"></div>
<div style="left:758.6px;top:413px;width:1px;height:490px;background:#75726d;"></div>
<div style="left:759.6px;top:413px;width:1px;height:490px;background:#aba8a2;"></div>
<div style="left:760.6px;top:413px;width:1px;height:490px;background:#fff;"></div>
<div style="left:761.6px;top:413px;width:1px;height:490px;background:#ecebe7;"></div>
<div style="left:763.4px;top:413px;width:1px;height:490px;background:#fff;"></div>
<div style="left:764.4px;top:413px;width:1px;height:490px;background:#e6e4df;"></div>
<span id="t54" class="t" style="top:419.50px;font-size:17.3px;left:349.50px;letter-spacing:0.298px;color:#b9b9b9;">Auction Items</span>
<span id="t55" class="t" style="top:444.47px;font-size:17.3px;left:380.50px;letter-spacing:0.848px;">DAYS</span>
<span id="t56" class="t" style="top:722.44px;font-size:17.3px;left:380.50px;letter-spacing:0.673px;">GRAVES</span>
<div style="left:408.4px;top:466.64000000000004px;width:259.4px;height:26px;background:#272d6f;border:1.5px solid #15152a;outline:1.5px dotted #f2e27a;outline-offset:-1.5px;"></div>
<span id="t57" class="t" style="top:469.74px;font-size:17.3px;left:412.50px;letter-spacing:0.465px;color:#fff;">.../Team 1/Police Officer #1</span>
<span id="t58" class="t" style="top:495.01px;font-size:17.3px;left:412.50px;letter-spacing:0.465px;">.../Team 1/Police Officer #2</span>
<span id="t59" class="t" style="top:520.28px;font-size:17.3px;left:412.50px;letter-spacing:0.465px;">.../Team 1/Police Officer #3</span>
<span id="t60" class="t" style="top:545.55px;font-size:17.3px;left:412.50px;letter-spacing:0.465px;">.../Team 1/Police Officer #4</span>
<span id="t61" class="t" style="top:570.82px;font-size:17.3px;left:412.50px;letter-spacing:0.465px;">.../Team 1/Police Officer #5</span>
<span id="t62" class="t" style="top:596.09px;font-size:17.3px;left:412.50px;letter-spacing:0.465px;">.../Team 2/Police Officer #1</span>
<span id="t63" class="t" style="top:621.36px;font-size:17.3px;left:412.50px;letter-spacing:0.465px;">.../Team 2/Police Officer #2</span>
<span id="t64" class="t" style="top:646.63px;font-size:17.3px;left:412.50px;letter-spacing:0.465px;">.../Team 2/Police Officer #3</span>
<span id="t65" class="t" style="top:671.90px;font-size:17.3px;left:412.50px;letter-spacing:0.465px;">.../Team 2/Police Officer #4</span>
<span id="t66" class="t" style="top:697.17px;font-size:17.3px;left:412.50px;letter-spacing:0.465px;">.../Team 2/Police Officer #5</span>
<span id="t67" class="t" style="top:747.71px;font-size:17.3px;left:412.50px;letter-spacing:0.465px;">.../Team 1/Police Officer #1</span>
<span id="t68" class="t" style="top:772.98px;font-size:17.3px;left:412.50px;letter-spacing:0.465px;">.../Team 1/Police Officer #2</span>
<span id="t69" class="t" style="top:798.25px;font-size:17.3px;left:412.50px;letter-spacing:0.465px;">.../Team 1/Police Officer #3</span>
<span id="t70" class="t" style="top:823.52px;font-size:17.3px;left:412.50px;letter-spacing:0.465px;">.../Team 1/Police Officer #4</span>
<span id="t71" class="t" style="top:848.79px;font-size:17.3px;left:412.50px;letter-spacing:0.465px;">.../Team 1/Police Officer #5</span>
<span id="t72" class="t" style="top:874.06px;font-size:17.3px;left:412.50px;letter-spacing:0.465px;">.../Team 2/Police Officer #1</span>
<svg style="left:0;top:0" width="760" height="900" viewBox="0 0 760 900"><style>.d2{stroke:#aaa698;stroke-width:1.5;stroke-dasharray:1.58 1.58;fill:none}</style><defs><radialGradient id="ball" cx=".38" cy=".32" r=".75"><stop offset="0" stop-color="#c8f0c0"/><stop offset=".35" stop-color="#3aa844"/><stop offset="1" stop-color="#0c5a1c"/></radialGradient></defs><path d="M313 426.5C322 427 328.4 433 328.4 446" class="d2"/><path d="M331 427.4H341.4L336.2 433.4Z" fill="#fff" stroke="#b4b0a4" stroke-width="1.2"/><path d="M328.4 461.6V725.5" class="d"/><path d="M335.5 454.6H346C355 454.6 359.8 459.6 359.8 468.6V707.3" class="d2"/><rect x="322.1" y="448.0" width="13.2" height="13.2" fill="#fff" stroke="#808080" stroke-width="1.5"/><path d="M324.7 454.6H332.7" stroke="#000" stroke-width="1.9"/><path d="M361.6 451.0H372.4L367.0 457.4Z" fill="#fff" stroke="#b4b0a4" stroke-width="1.2"/><path d="M328.4 739.5V902.0" class="d"/><path d="M335.5 732.5H346C355 732.5 359.8 737.5 359.8 746.5V902.0" class="d2"/><rect x="322.1" y="725.9" width="13.2" height="13.2" fill="#fff" stroke="#808080" stroke-width="1.5"/><path d="M324.7 732.5H332.7" stroke="#000" stroke-width="1.9"/><path d="M361.6 728.9H372.4L367.0 735.3Z" fill="#fff" stroke="#b4b0a4" stroke-width="1.2"/><path d="M361.5 479.8H394" class="d"/><circle cx="400" cy="481.8" r="4.2" fill="#a89cb0" opacity=".35"/><circle cx="398.6" cy="480.4" r="4.3" fill="url(#ball)" stroke="#0e4a1a" stroke-width=".5"/><path d="M361.5 505.1H394" class="d"/><circle cx="400" cy="507.1" r="4.2" fill="#a89cb0" opacity=".35"/><circle cx="398.6" cy="505.7" r="4.3" fill="url(#ball)" stroke="#0e4a1a" stroke-width=".5"/><path d="M361.5 530.4H394" class="d"/><circle cx="400" cy="532.4" r="4.2" fill="#a89cb0" opacity=".35"/><circle cx="398.6" cy="531.0" r="4.3" fill="url(#ball)" stroke="#0e4a1a" stroke-width=".5"/><path d="M361.5 555.6H394" class="d"/><circle cx="400" cy="557.6" r="4.2" fill="#a89cb0" opacity=".35"/><circle cx="398.6" cy="556.2" r="4.3" fill="url(#ball)" stroke="#0e4a1a" stroke-width=".5"/><path d="M361.5 580.9H394" class="d"/><circle cx="400" cy="582.9" r="4.2" fill="#a89cb0" opacity=".35"/><circle cx="398.6" cy="581.5" r="4.3" fill="url(#ball)" stroke="#0e4a1a" stroke-width=".5"/><path d="M361.5 606.2H394" class="d"/><circle cx="400" cy="608.2" r="4.2" fill="#a89cb0" opacity=".35"/><circle cx="398.6" cy="606.8" r="4.3" fill="url(#ball)" stroke="#0e4a1a" stroke-width=".5"/><path d="M361.5 631.5H394" class="d"/><circle cx="400" cy="633.5" r="4.2" fill="#a89cb0" opacity=".35"/><circle cx="398.6" cy="632.1" r="4.3" fill="url(#ball)" stroke="#0e4a1a" stroke-width=".5"/><path d="M361.5 656.7H394" class="d"/><circle cx="400" cy="658.7" r="4.2" fill="#a89cb0" opacity=".35"/><circle cx="398.6" cy="657.3" r="4.3" fill="url(#ball)" stroke="#0e4a1a" stroke-width=".5"/><path d="M361.5 682.0H394" class="d"/><circle cx="400" cy="684.0" r="4.2" fill="#a89cb0" opacity=".35"/><circle cx="398.6" cy="682.6" r="4.3" fill="url(#ball)" stroke="#0e4a1a" stroke-width=".5"/><path d="M361.5 707.3H394" class="d"/><circle cx="400" cy="709.3" r="4.2" fill="#a89cb0" opacity=".35"/><circle cx="398.6" cy="707.9" r="4.3" fill="url(#ball)" stroke="#0e4a1a" stroke-width=".5"/><path d="M361.5 757.8H394" class="d"/><circle cx="400" cy="759.8" r="4.2" fill="#a89cb0" opacity=".35"/><circle cx="398.6" cy="758.4" r="4.3" fill="url(#ball)" stroke="#0e4a1a" stroke-width=".5"/><path d="M361.5 783.1H394" class="d"/><circle cx="400" cy="785.1" r="4.2" fill="#a89cb0" opacity=".35"/><circle cx="398.6" cy="783.7" r="4.3" fill="url(#ball)" stroke="#0e4a1a" stroke-width=".5"/><path d="M361.5 808.4H394" class="d"/><circle cx="400" cy="810.4" r="4.2" fill="#a89cb0" opacity=".35"/><circle cx="398.6" cy="809.0" r="4.3" fill="url(#ball)" stroke="#0e4a1a" stroke-width=".5"/><path d="M361.5 833.6H394" class="d"/><circle cx="400" cy="835.6" r="4.2" fill="#a89cb0" opacity=".35"/><circle cx="398.6" cy="834.2" r="4.3" fill="url(#ball)" stroke="#0e4a1a" stroke-width=".5"/><path d="M361.5 858.9H394" class="d"/><circle cx="400" cy="860.9" r="4.2" fill="#a89cb0" opacity=".35"/><circle cx="398.6" cy="859.5" r="4.3" fill="url(#ball)" stroke="#0e4a1a" stroke-width=".5"/><path d="M361.5 884.2H394" class="d"/><circle cx="400" cy="886.2" r="4.2" fill="#a89cb0" opacity=".35"/><circle cx="398.6" cy="884.8" r="4.3" fill="url(#ball)" stroke="#0e4a1a" stroke-width=".5"/></svg>
<div style="left:768.4px;top:413.4px;width:11px;height:1px;background:#75726d;"></div>
<div style="left:768.4px;top:414.4px;width:11px;height:1px;background:#aba8a2;"></div>
<div style="left:768.4px;top:415.4px;width:11px;height:1px;background:#fff;"></div>
<div style="left:997px;top:413.4px;width:303.5px;height:1px;background:#75726d;"></div>
<div style="left:997px;top:414.4px;width:303.5px;height:1px;background:#aba8a2;"></div>
<div style="left:997px;top:415.4px;width:303.5px;height:1px;background:#fff;"></div>
<div style="left:768.2px;top:413.4px;width:1px;height:490px;background:#75726d;"></div>
<div style="left:769.2px;top:413.4px;width:1px;height:490px;background:#aba8a2;"></div>
<div style="left:770.2px;top:413.4px;width:1px;height:490px;background:#fff;"></div>
<div style="left:1298.4px;top:413.4px;width:1px;height:490px;background:#75726d;"></div>
<div style="left:1299.4px;top:413.4px;width:1px;height:490px;background:#aba8a2;"></div>
<div style="left:1300.4px;top:413.4px;width:1px;height:490px;background:#fff;"></div>
<span id="t73" class="t" style="top:404.20px;font-size:17.3px;left:781.30px;letter-spacing:0.353px;color:#827f7a;text-shadow:1.3px 1.3px 0 #fff;">Auction Item Properties</span>
<span id="t74" class="t" style="top:436.20px;font-size:17.3px;left:851.70px;letter-spacing:-0.061px;">Name</span>
<div style="left:908.6px;top:429px;width:169.4px;height:32.5px;background:#fff;box-shadow:inset 1px 1px #808080,inset -1px -1px #fff,inset 2px 2px #5a5a5a,inset -2px -2px #ecebe7,inset 3px 3px #404040,inset -3px -3px #d4d0c8;"></div>
<span id="t75" class="t" style="top:436.20px;font-size:17.3px;left:913.30px;letter-spacing:0.627px;">.../Team 1/Police</span>
<div style="left:1084px;top:429px;width:192px;height:32.5px;background:#fff;box-shadow:inset 1px 1px #808080,inset -1px -1px #fff,inset 2px 2px #5a5a5a,inset -2px -2px #ecebe7,inset 3px 3px #404040,inset -3px -3px #d4d0c8;"></div>
<div style="left:1250px;top:432px;width:23px;height:26.5px;background:#d4d0c8;box-shadow:inset 1px 1px #fff,inset -1px -1px #404040,inset 2px 2px #ecebe7,inset -2px -2px #606060,inset 3px 3px #d4d0c8,inset -3px -3px #808080;"></div>
<svg style="left:1254.75px;top:441.40000000000003px" width="13.5" height="8.3" viewBox="0 0 13.5 8.3"><path d="M1 1H12.5L6.75 7.3Z" fill="#000"/></svg>
<span id="t76" class="t" style="top:437.00px;font-size:17.3px;left:1096.50px;letter-spacing:-0.256px;">&lt;none&gt;</span>
<span id="t77" class="t" style="top:475.00px;font-size:17.3px;left:802.50px;letter-spacing:0.156px;">Description</span>
<div style="left:908.6px;top:467px;width:169.4px;height:32px;background:#fff;box-shadow:inset 1px 1px #808080,inset -1px -1px #fff,inset 2px 2px #5a5a5a,inset -2px -2px #ecebe7,inset 3px 3px #404040,inset -3px -3px #d4d0c8;"></div>
<div style="left:1084px;top:467px;width:192px;height:32px;background:#fff;box-shadow:inset 1px 1px #808080,inset -1px -1px #fff,inset 2px 2px #5a5a5a,inset -2px -2px #ecebe7,inset 3px 3px #404040,inset -3px -3px #d4d0c8;"></div>
<div style="left:1250px;top:470px;width:23px;height:26px;background:#d4d0c8;box-shadow:inset 1px 1px #fff,inset -1px -1px #404040,inset 2px 2px #ecebe7,inset -2px -2px #606060,inset 3px 3px #d4d0c8,inset -3px -3px #808080;"></div>
<svg style="left:1254.75px;top:479.15000000000003px" width="13.5" height="8.3" viewBox="0 0 13.5 8.3"><path d="M1 1H12.5L6.75 7.3Z" fill="#000"/></svg>
<span id="t78" class="t" style="top:475.00px;font-size:17.3px;left:1096.50px;letter-spacing:-0.256px;">&lt;none&gt;</span>
<div style="left:791.6px;top:547.3px;width:20.7px;height:20.7px;background:#d4d0c8;box-shadow:inset 1px 1px #808080,inset -1px -1px #fff,inset 2px 2px #5a5a5a,inset -2px -2px #ecebe7,inset 3px 3px #404040,inset -3px -3px #d4d0c8;"></div>
<div style="left:794.6px;top:550.3px;width:14.7px;height:14.7px;background-image:conic-gradient(#fff 25%,#d4d0c8 0 50%,#fff 0 75%,#d4d0c8 0);background-size:3.16px 3.16px;"></div>
<svg style="left:791.6px;top:547.3px" width="21" height="21" viewBox="0 0 21 21"><path d="M4.8 8.6L8.8 12.4L16 5V9.4L8.8 16.6L4.8 12.8Z" fill="#85827c"/></svg>
<span id="t79" class="t" style="top:548.60px;font-size:17.3px;left:844.10px;letter-spacing:0.259px;">Visible</span>
<div style="left:908.6px;top:541px;width:330px;height:32.5px;background:#d4d0c8;box-shadow:inset 1px 1px #808080,inset -1px -1px #fff,inset 2px 2px #5a5a5a,inset -2px -2px #ecebe7,inset 3px 3px #404040,inset -3px -3px #d4d0c8;"></div>
<span id="t80" class="t" style="top:546.00px;font-size:17.3px;left:911.70px;letter-spacing:0.762px;">PERSONHASJOBTITLE(5)</span>
<div style="left:1241.6px;top:541px;width:36px;height:32.5px;background:#d4d0c8;box-shadow:inset 1px 1px #fff,inset -1px -1px #404040,inset 2px 2px #ecebe7,inset -2px -2px #606060,inset 3px 3px #d4d0c8,inset -3px -3px #808080;"></div>
<span id="t81" class="t" style="top:548.60px;font-size:17.3px;left:1251.20px;letter-spacing:0.208px;">...</span>
<div style="left:791.6px;top:582px;width:20.7px;height:20.7px;background:#fff;box-shadow:inset 1px 1px #808080,inset -1px -1px #fff,inset 2px 2px #5a5a5a,inset -2px -2px #ecebe7,inset 3px 3px #404040,inset -3px -3px #d4d0c8;"></div>
<svg style="left:791.6px;top:582px" width="21" height="21" viewBox="0 0 21 21"><path d="M4.8 8.6L8.8 12.4L16 5V9.4L8.8 16.6L4.8 12.8Z" fill="#000"/></svg>
<span id="t82" class="t" style="top:583.60px;font-size:17.3px;left:824.80px;letter-spacing:0.301px;">Biddable</span>
<div style="left:908.6px;top:576px;width:330px;height:32px;background:#d4d0c8;box-shadow:inset 1px 1px #808080,inset -1px -1px #fff,inset 2px 2px #5a5a5a,inset -2px -2px #ecebe7,inset 3px 3px #404040,inset -3px -3px #d4d0c8;"></div>
<div style="left:1241.6px;top:576px;width:36px;height:32px;background:#d4d0c8;box-shadow:inset 1px 1px #fff,inset -1px -1px #404040,inset 2px 2px #ecebe7,inset -2px -2px #606060,inset 3px 3px #d4d0c8,inset -3px -3px #808080;"></div>
<span id="t83" class="t" style="top:583.10px;font-size:17.3px;left:1251.20px;letter-spacing:0.208px;">...</span>
<div style="left:791.6px;top:617px;width:20.7px;height:20.7px;background:#fff;box-shadow:inset 1px 1px #808080,inset -1px -1px #fff,inset 2px 2px #5a5a5a,inset -2px -2px #ecebe7,inset 3px 3px #404040,inset -3px -3px #d4d0c8;"></div>
<svg style="left:791.6px;top:617px" width="21" height="21" viewBox="0 0 21 21"><path d="M4.8 8.6L8.8 12.4L16 5V9.4L8.8 16.6L4.8 12.8Z" fill="#000"/></svg>
<span id="t84" class="t" style="top:618.20px;font-size:17.3px;left:820.70px;letter-spacing:0.143px;">Winnable</span>
<div style="left:908.6px;top:611px;width:330px;height:32px;background:#d4d0c8;box-shadow:inset 1px 1px #808080,inset -1px -1px #fff,inset 2px 2px #5a5a5a,inset -2px -2px #ecebe7,inset 3px 3px #404040,inset -3px -3px #d4d0c8;"></div>
<div style="left:1241.6px;top:611px;width:36px;height:32px;background:#d4d0c8;box-shadow:inset 1px 1px #fff,inset -1px -1px #404040,inset 2px 2px #ecebe7,inset -2px -2px #606060,inset 3px 3px #d4d0c8,inset -3px -3px #808080;"></div>
<span id="t85" class="t" style="top:618.10px;font-size:17.3px;left:1251.20px;letter-spacing:0.208px;">...</span>
<span id="t86" class="t" style="top:653.80px;font-size:17.3px;left:908.90px;letter-spacing:0.371px;">Dynamic (Auction Qty)</span>
<span id="t87" class="t" style="top:653.80px;font-size:17.3px;left:1130.60px;letter-spacing:0.365px;">Static (Max Qty)</span>
<span id="t88" class="t" style="top:681.60px;font-size:17.3px;left:826.30px;letter-spacing:0.216px;">Quantity</span>
<div style="left:908.6px;top:674.6px;width:212px;height:31px;background:#fff;box-shadow:inset 1px 1px #808080,inset -1px -1px #fff,inset 2px 2px #5a5a5a,inset -2px -2px #ecebe7,inset 3px 3px #404040,inset -3px -3px #d4d0c8;"></div>
<div style="left:1094.6px;top:677.6px;width:23px;height:25px;background:#d4d0c8;box-shadow:inset 1px 1px #fff,inset -1px -1px #404040,inset 2px 2px #ecebe7,inset -2px -2px #606060,inset 3px 3px #d4d0c8,inset -3px -3px #808080;"></div>
<svg style="left:1099.35px;top:686.25px" width="13.5" height="8.3" viewBox="0 0 13.5 8.3"><path d="M1 1H12.5L6.75 7.3Z" fill="#000"/></svg>
<span id="t89" class="t" style="top:682.00px;font-size:17.3px;left:922.10px;letter-spacing:-0.276px;">&lt;none&gt;</span>
<div style="left:1127.4px;top:674.6px;width:148.6px;height:31px;background:#fff;box-shadow:inset 1px 1px #808080,inset -1px -1px #fff,inset 2px 2px #5a5a5a,inset -2px -2px #ecebe7,inset 3px 3px #404040,inset -3px -3px #d4d0c8;"></div>
<span id="t90" class="t" style="top:681.00px;font-size:17.3px;left:1133.50px;letter-spacing:0.786px;">1</span>
<span id="t91" class="t" style="top:719.20px;font-size:17.3px;left:782.70px;letter-spacing:0.150px;">Qualifications</span>
<div style="left:908.6px;top:710px;width:330px;height:32px;background:#d4d0c8;box-shadow:inset 1px 1px #808080,inset -1px -1px #fff,inset 2px 2px #5a5a5a,inset -2px -2px #ecebe7,inset 3px 3px #404040,inset -3px -3px #d4d0c8;"></div>
<span id="t92" class="t" style="top:716.20px;font-size:17.3px;left:913.50px;letter-spacing:0.016px;">Auctions</span>
<div style="left:1241.6px;top:710.6px;width:36px;height:32px;background:#d4d0c8;box-shadow:inset 1px 1px #fff,inset -1px -1px #404040,inset 2px 2px #ecebe7,inset -2px -2px #606060,inset 3px 3px #d4d0c8,inset -3px -3px #808080;"></div>
<span id="t93" class="t" style="top:717.70px;font-size:17.3px;left:1251.20px;letter-spacing:0.208px;">...</span>
<span id="t94" class="t" style="top:754.60px;font-size:17.3px;left:799.50px;letter-spacing:0.476px;">Award type</span>
<div style="left:908.6px;top:746px;width:285px;height:32.5px;background:#fff;box-shadow:inset 1px 1px #808080,inset -1px -1px #fff,inset 2px 2px #5a5a5a,inset -2px -2px #ecebe7,inset 3px 3px #404040,inset -3px -3px #d4d0c8;"></div>
<div style="left:1165.6px;top:749px;width:25px;height:26.5px;background:#d4d0c8;box-shadow:inset 1px 1px #fff,inset -1px -1px #404040,inset 2px 2px #ecebe7,inset -2px -2px #606060,inset 3px 3px #d4d0c8,inset -3px -3px #808080;"></div>
<svg style="left:1171.35px;top:758.4px" width="13.5" height="8.3" viewBox="0 0 13.5 8.3"><path d="M1 1H12.5L6.75 7.3Z" fill="#000"/></svg>
<span id="t95" class="t" style="top:754.20px;font-size:17.3px;left:914.50px;letter-spacing:0.306px;">Assignment</span>
<span id="t96" class="t" style="top:756.60px;font-size:15px;left:1209.10px;letter-spacing:0.682px;color:#8c8a84;">2</span>
<div style="left:1241.6px;top:746px;width:36px;height:33px;background:#d4d0c8;box-shadow:inset 1px 1px #fff,inset -1px -1px #404040,inset 2px 2px #ecebe7,inset -2px -2px #606060,inset 3px 3px #d4d0c8,inset -3px -3px #808080;"></div>
<span id="t97" class="t" style="top:754.10px;font-size:17.3px;left:1251.20px;letter-spacing:0.208px;">...</span>
<span id="t98" class="t" style="top:884.60px;font-size:16px;left:1258.10px;letter-spacing:2.247px;color:#8c8a84;letter-spacing:0;">-2</span>
</div></body></html>
